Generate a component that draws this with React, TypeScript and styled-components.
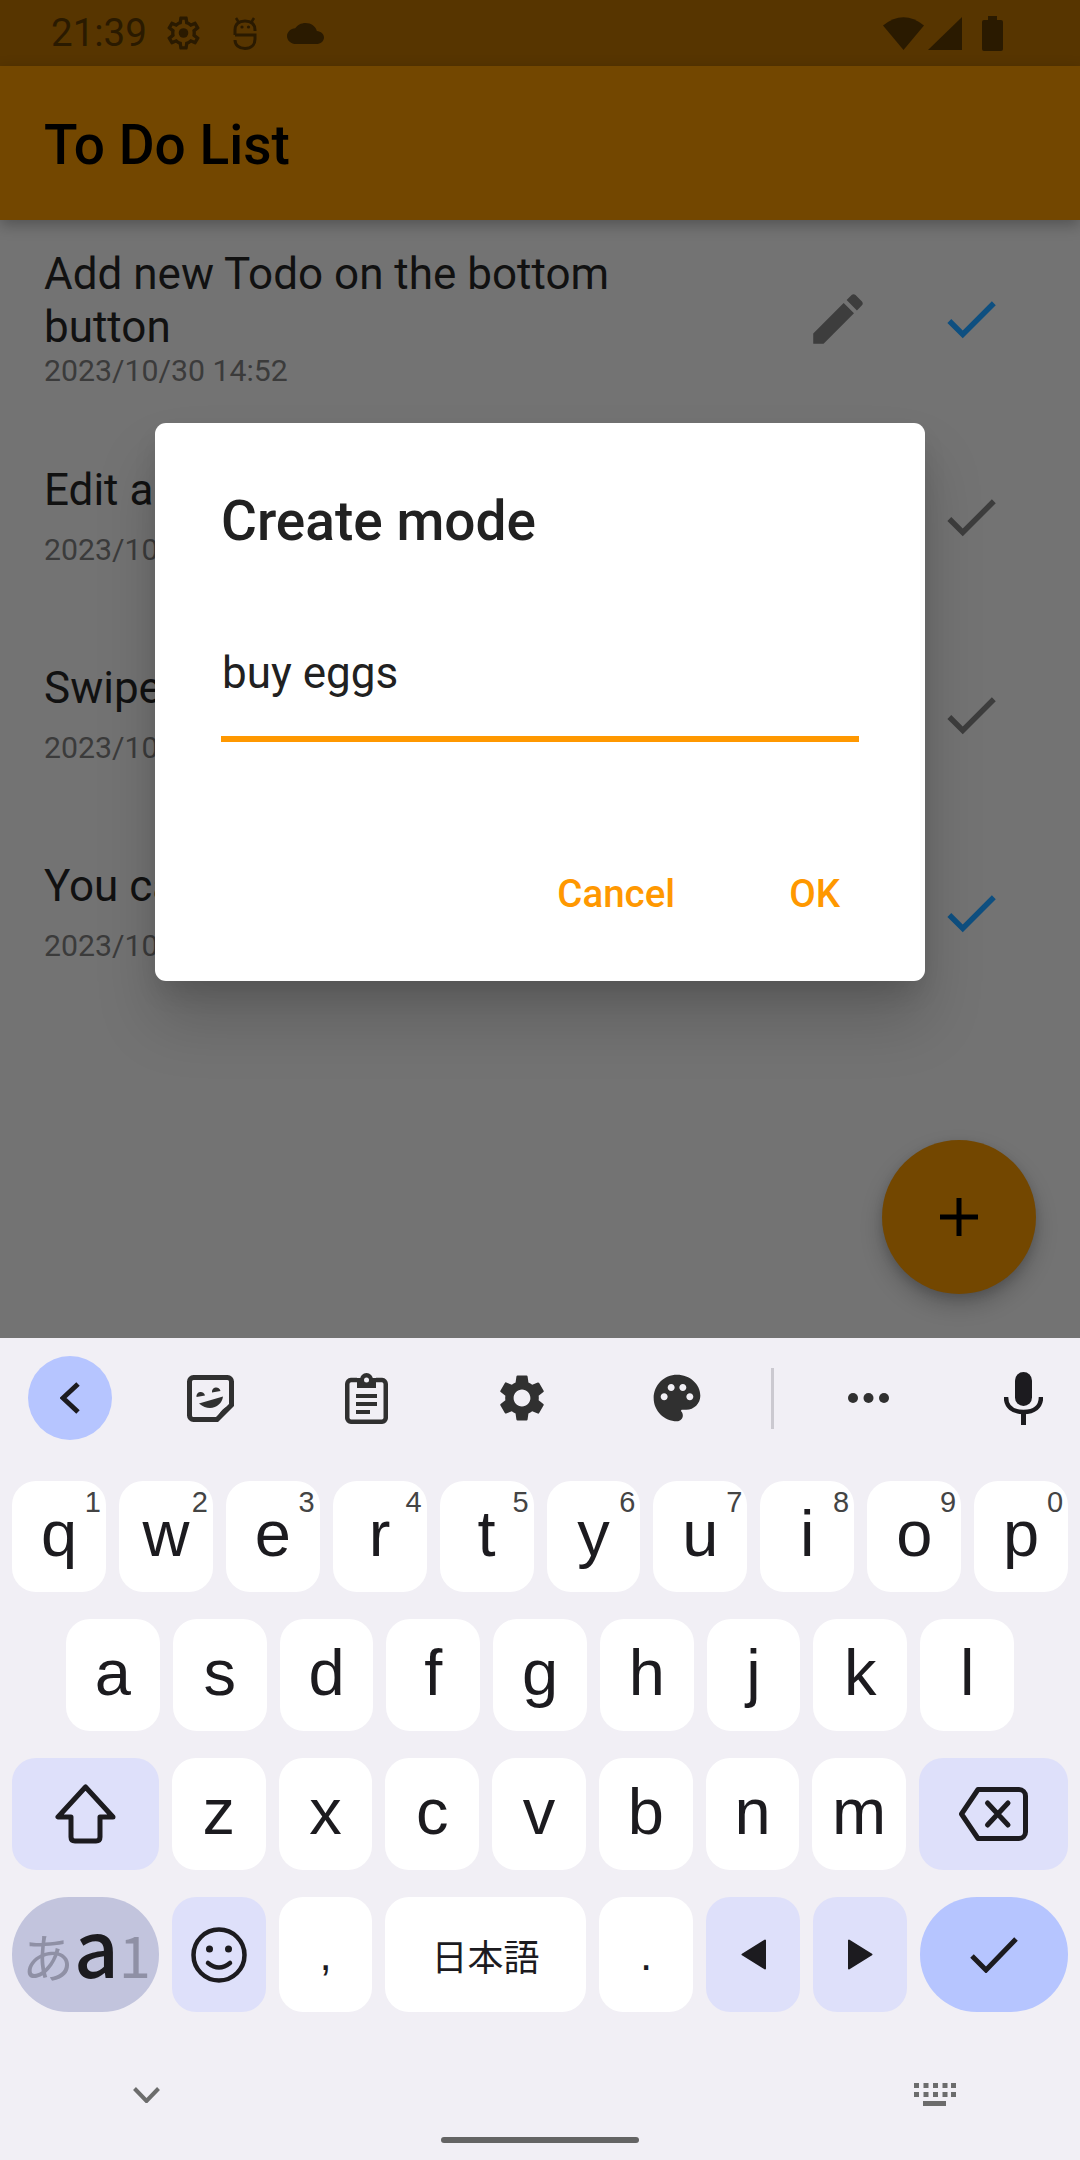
import styled, { createGlobalStyle } from "styled-components";

const GlobalStyle = createGlobalStyle`
  html, body {
    margin: 0;
    padding: 0;
    background: #f1eff5;
  }
  * {
    box-sizing: border-box;
  }
`;

const Page = styled.div`
  width: 1080px;
  height: 2160px;
  overflow: hidden;
  display: flex;
  flex-direction: column;
  font-family: Roboto, "Liberation Sans", sans-serif;
`;

const AppArea = styled.div`
  position: relative;
  height: 1338px;
  flex-shrink: 0;
  background: #737373;
`;

const StatusBar = styled.div`
  height: 66px;
  display: flex;
  align-items: center;
  padding: 0 77px 0 51px;
  background: #573500;
  color: #2a1a00;
`;

const Clock = styled.span`
  font-size: 38.5px;
  line-height: 66px;
`;

const StatusSpacer = styled.div`
  flex: 1;
`;

const StatusIcon = styled.svg<{ $left: number }>`
  display: block;
  flex-shrink: 0;
  margin-left: ${(p) => p.$left}px;
`;

const AppBar = styled.header`
  position: relative;
  height: 154px;
  display: flex;
  align-items: center;
  padding: 3px 0 0 44px;
  background: #734700;
  box-shadow: 0 5px 14px rgba(0, 0, 0, 0.28);
`;

const AppTitle = styled.h1`
  margin: 0;
  font-size: 55px;
  font-weight: 500;
  line-height: 64px;
  color: #000;
`;

const TodoRow = styled.div`
  height: 198px;
  display: flex;
  align-items: center;
  padding: 0 43px 0 44px;
`;

const TodoText = styled.div`
  flex: 1;
  margin-bottom: 2px;
`;

const TodoTitle = styled.div<{ $gap: number }>`
  max-width: 640px;
  margin-bottom: ${(p) => p.$gap}px;
  font-size: 44px;
  line-height: 53px;
  color: #111;
`;

const TodoDate = styled.div`
  font-size: 30.25px;
  line-height: 36px;
  color: #3b3b3b;
`;

const RowAction = styled.div<{ $color: string }>`
  width: 133px;
  display: flex;
  justify-content: center;
  color: ${(p) => p.$color};
`;

const Fab = styled.div`
  position: absolute;
  left: 882px;
  top: 1140px;
  width: 154px;
  height: 154px;
  border-radius: 50%;
  display: flex;
  align-items: center;
  justify-content: center;
  background: #734700;
  box-shadow: 0 11px 22px rgba(0, 0, 0, 0.22), 0 4px 10px rgba(0, 0, 0, 0.12);
`;

const Dialog = styled.div`
  position: absolute;
  left: 155px;
  top: 423px;
  width: 770px;
  height: 558px;
  display: flex;
  flex-direction: column;
  padding: 66px 66px 0 66px;
  border-radius: 11px;
  background: #fff;
  box-shadow: 0 40px 60px rgba(0, 0, 0, 0.17), 0 14px 28px -6px rgba(0, 0, 0, 0.14);
`;

const DialogTitle = styled.div`
  font-size: 55px;
  font-weight: 500;
  line-height: 64px;
  color: #212121;
`;

const DialogInput = styled.div`
  margin: 94px 0 0 0;
  padding: 0 0 37px 1px;
  border-bottom: 6px solid #ff9800;
  font-size: 44px;
  line-height: 52px;
  color: #212121;
`;

const DialogActions = styled.div`
  margin-top: 130px;
  padding-right: 19px;
  display: flex;
  justify-content: flex-end;
  gap: 114px;
`;

const DialogButton = styled.span`
  font-size: 38.5px;
  font-weight: 500;
  line-height: 44px;
  color: #ff9800;
`;

const Keyboard = styled.div`
  flex: 1;
  display: flex;
  flex-direction: column;
  background: #f1eff5;
`;

const Toolbar = styled.div`
  height: 120px;
  margin-bottom: 23px;
  display: flex;
  align-items: center;
  padding-left: 28px;
  color: #303030;
`;

const BackPill = styled.div`
  width: 84px;
  height: 84px;
  margin-right: 21px;
  border-radius: 50%;
  display: flex;
  align-items: center;
  justify-content: center;
  background: #b6c5ff;
`;

const ToolSlot = styled.div<{ $width: number }>`
  width: ${(p) => p.$width}px;
  flex-shrink: 0;
  display: flex;
  align-items: center;
  justify-content: center;
`;

const ToolDivider = styled.div`
  width: 3px;
  height: 61px;
  margin: 0 16px;
  background: #cbc9d0;
`;

const MicSlot = styled(ToolSlot)`
  margin-left: 27px;
`;

const KeyRows = styled.div`
  display: flex;
  flex-direction: column;
  gap: 27px;
  padding: 0 12px;
`;

const KeyRow = styled.div<{ $height: number; $inset?: number }>`
  height: ${(p) => p.$height}px;
  display: flex;
  gap: 13px;
  padding: 0 ${(p) => p.$inset ?? 0}px;
`;

const keyColors = {
  letter: "#ffffff",
  func: "#dee0fa",
  lang: "#c2c4dd",
  enter: "#b6c5ff",
};

const Key = styled.div<{ $tone?: keyof typeof keyColors; $width?: number }>`
  position: relative;
  ${(p) => (p.$width ? `width: ${p.$width}px; flex-shrink: 0;` : "flex: 1;")}
  display: flex;
  align-items: center;
  justify-content: center;
  border-radius: ${(p) => (p.$tone === "lang" || p.$tone === "enter" ? "57px" : "24px")};
  background: ${(p) => keyColors[p.$tone ?? "letter"]};
  color: #1c1b1f;
`;

const Letter = styled.span`
  padding-bottom: 6px;
  font-family: "Liberation Sans", Arial, sans-serif;
  font-size: 65px;
  line-height: 1;
`;

const KeyHint = styled.span`
  position: absolute;
  top: 7px;
  right: 5px;
  font-family: "Liberation Sans", Arial, sans-serif;
  font-size: 29px;
  line-height: 1;
  color: #444;
`;

const Punctuation = styled.span`
  font-family: "Liberation Sans", Arial, sans-serif;
  font-size: 44px;
  line-height: 1;
`;

const SpaceLabel = styled.span`
  font-family: "Noto Sans CJK JP", sans-serif;
  font-size: 36px;
  line-height: 1;
`;

const LangLabel = styled.div`
  display: flex;
  align-items: baseline;
  padding: 0 0 22px 2px;
  font-family: "Noto Sans CJK JP", sans-serif;
  color: #8f90a5;
`;

const LangKana = styled.span`
  font-size: 52px;
  line-height: 1;
`;

const LangLatin = styled.span`
  font-size: 78px;
  font-weight: 500;
  line-height: 1;
  color: #1c1b1f;
`;

const LangDigit = styled.span`
  font-size: 58px;
  line-height: 1;
`;

const BottomNav = styled.div`
  height: 23px;
  margin-top: 71px;
  display: flex;
  align-items: center;
  justify-content: space-between;
  padding: 0 124px 0 133px;
  color: #6c6c6c;
`;

const HomePill = styled.div`
  width: 198px;
  height: 6px;
  margin: 31px auto 0;
  border-radius: 3px;
  background: #646464;
`;

const GEAR_OUTLINE =
  "M19.43 12.98c.04-.32.07-.64.07-.98 0-.34-.03-.66-.07-.98l2.11-1.65c.19-.15.24-.42.12-.64l-2-3.46c-.09-.16-.26-.25-.44-.25-.06 0-.12.01-.17.03l-2.49 1c-.52-.4-1.08-.73-1.69-.98l-.38-2.65C14.46 2.18 14.25 2 14 2h-4c-.25 0-.46.18-.49.42l-.38 2.65c-.61.25-1.17.59-1.69.98l-2.49-1c-.06-.02-.12-.03-.18-.03-.17 0-.34.09-.43.25l-2 3.46c-.13.22-.07.49.12.64l2.11 1.65c-.04.32-.07.65-.07.98 0 .33.03.66.07.98l-2.11 1.65c-.19.15-.24.42-.12.64l2 3.46c.09.16.26.25.44.25.06 0 .12-.01.17-.03l2.49-1c.52.4 1.08.73 1.69.98l.38 2.65c.03.24.24.42.49.42h4c.25 0 .46-.18.49-.42l.38-2.65c.61-.25 1.17-.59 1.69-.98l2.49 1c.06.02.12.03.18.03.17 0 .34-.09.43-.25l2-3.46c.12-.22.07-.49-.12-.64l-2.11-1.65zm-1.98-1.71c.04.31.05.52.05.73 0 .21-.02.43-.05.73l-.14 1.13.89.7 1.08.84-.7 1.21-1.27-.51-1.04-.42-.9.68c-.43.32-.84.56-1.25.73l-1.06.43-.16 1.13-.2 1.35h-1.4l-.19-1.35-.16-1.13-1.06-.43c-.43-.18-.83-.41-1.23-.71l-.91-.7-1.06.43-1.27.51-.7-1.21 1.08-.84.89-.7-.14-1.13c-.03-.31-.05-.54-.05-.74s.02-.43.05-.73l.14-1.13-.89-.7-1.08-.84.7-1.21 1.27.51 1.04.42.9-.68c.43-.32.84-.56 1.25-.73l1.06-.43.16-1.13.2-1.35h1.39l.19 1.35.16 1.13 1.06.43c.43.18.83.41 1.23.71l.91.7 1.06-.43 1.27-.51.7 1.21-1.07.85-.89.7.14 1.13z";
const GEAR_SOLID =
  "M19.14 12.94c.04-.3.06-.61.06-.94 0-.32-.02-.64-.07-.94l2.03-1.58c.18-.14.23-.41.12-.61l-1.92-3.32c-.12-.22-.37-.29-.59-.22l-2.39.96c-.5-.38-1.03-.7-1.62-.94l-.36-2.54c-.04-.24-.24-.41-.48-.41h-3.84c-.24 0-.43.17-.47.41l-.36 2.54c-.59.24-1.13.57-1.62.94l-2.39-.96c-.22-.08-.47 0-.59.22L2.74 8.87c-.12.21-.08.47.12.61l2.03 1.58c-.05.3-.09.63-.09.94s.02.64.07.94l-2.03 1.58c-.18.14-.23.41-.12.61l1.92 3.32c.12.22.37.29.59.22l2.39-.96c.5.38 1.03.7 1.62.94l.36 2.54c.05.24.24.41.48.41h3.84c.24 0 .44-.17.47-.41l.36-2.54c.59-.24 1.13-.56 1.62-.94l2.39.96c.22.08.47 0 .59-.22l1.92-3.32c.12-.22.07-.47-.12-.61l-2.01-1.58zM12 15.6c-1.98 0-3.6-1.62-3.6-3.6s1.62-3.6 3.6-3.6 3.6 1.62 3.6 3.6-1.62 3.6-3.6 3.6z";
const PALETTE =
  "M12 2C6.49 2 2 6.49 2 12s4.49 10 10 10c1.38 0 2.5-1.12 2.5-2.5 0-.61-.23-1.2-.64-1.67-.08-.1-.13-.21-.13-.33 0-.28.22-.5.5-.5H16c3.31 0 6-2.69 6-6 0-4.96-4.49-9-10-9zm5.5 11c-.83 0-1.5-.67-1.5-1.5s.67-1.5 1.5-1.5 1.5.67 1.5 1.5-.67 1.5-1.5 1.5zm-3-4c-.83 0-1.5-.67-1.5-1.5S13.67 6 14.5 6s1.5.67 1.5 1.5S15.33 9 14.5 9zM5 11.5c0-.83.67-1.5 1.5-1.5s1.5.67 1.5 1.5S7.33 13 6.5 13 5 12.33 5 11.5zm6-4c0 .83-.67 1.5-1.5 1.5S8 8.33 8 7.5 8.67 6 9.5 6s1.5.67 1.5 1.5z";
const PENCIL =
  "M3 17.25V21h3.75L17.81 9.94l-3.75-3.75L3 17.25zM20.71 7.04c.39-.39.39-1.02 0-1.41l-2.34-2.34c-.39-.39-1.02-.39-1.41 0l-1.83 1.83 3.75 3.75 1.83-1.83z";
const CHECK = "M9 16.17L4.83 12l-1.42 1.41L9 19 21 7l-1.41-1.41z";

const todos = [
  { title: "Add new Todo on the bottom button", gap: -1, done: true },
  { title: "Edit a Todo", gap: 15, done: false },
  { title: "Swipe to delete", gap: 15, done: false },
  { title: "You can check", gap: 15, done: true },
];

const firstRow = [
  ["q", "1"],
  ["w", "2"],
  ["e", "3"],
  ["r", "4"],
  ["t", "5"],
  ["y", "6"],
  ["u", "7"],
  ["i", "8"],
  ["o", "9"],
  ["p", "0"],
];

function SignalIcons() {
  return (
    <>
      <StatusIcon $left={0} width="41" height="33" viewBox="0 0 41 33" fill="currentColor">
        <path d="M0 8.5Q20.5 -8 41 8.5L20.5 33Z" />
      </StatusIcon>
      <StatusIcon $left={4} width="34" height="33" viewBox="0 0 34 33" fill="currentColor">
        <path d="M34 0V33H0Z" />
      </StatusIcon>
      <StatusIcon $left={20} width="21" height="35" viewBox="0 0 21 35" fill="currentColor">
        <path d="M6 0H15V4H19Q21 4 21 6V33Q21 35 19 35H2Q0 35 0 33V6Q0 4 2 4H6Z" />
      </StatusIcon>
    </>
  );
}

function NotificationIcons() {
  return (
    <>
      <StatusIcon $left={20} width="33" height="34" viewBox="2 2 20 20" fill="currentColor">
        <path fillRule="evenodd" d={GEAR_OUTLINE} />
        <circle cx="12" cy="12" r="2.9" />
      </StatusIcon>
      <StatusIcon
        $left={33}
        width="24"
        height="33"
        viewBox="0 0 24 33"
        fill="none"
        stroke="currentColor"
        strokeWidth="3"
      >
        <path d="M2 18V13C2 7 6 4 12 4S22 7 22 13V14" />
        <path d="M2 18H22V22C22 28 18 31.5 12 31.5S2 28 2 23" />
        <path d="M3 1L5.5 5M21 1L18.5 5" strokeWidth="2.5" />
        <circle cx="9" cy="10" r="1.6" fill="currentColor" stroke="none" />
        <circle cx="15.5" cy="10" r="1.6" fill="currentColor" stroke="none" />
      </StatusIcon>
      <StatusIcon $left={30} width="37" height="21" viewBox="0 4 24 16" preserveAspectRatio="none" fill="currentColor">
        <path d="M19.35 10.04C18.67 6.59 15.64 4 12 4 9.11 4 6.6 5.64 5.35 8.04 2.34 8.36 0 10.91 0 14c0 3.31 2.69 6 6 6h13c2.76 0 5-2.24 5-5 0-2.64-2.05-4.78-4.65-4.96z" />
      </StatusIcon>
    </>
  );
}

function StickerIcon() {
  return (
    <svg width="47" height="47" viewBox="0 0 47 47" fill="currentColor">
      <path
        d="M6.5 2.5H40.500A4 4 0 0 1 44.500 6.500V30L30 44.500H6.500A4 4 0 0 1 2.500 40.500V6.500A4 4 0 0 1 6.500 2.500Z"
        fill="none"
        stroke="currentColor"
        strokeWidth="5"
      />
      <path d="M47 30Q33 31 29 47Z" />
      <path d="M9.500 22A4.300 4.300 0 0 1 18 20.500Z" />
      <path d="M25 17.500A4.300 4.300 0 0 1 33.500 16Z" />
      <path d="M12 28.500L36 21.500C35 31 23 38 12 28.500Z" />
    </svg>
  );
}

function ClipboardIcon() {
  return (
    <svg width="43" height="51" viewBox="0 0 43 51" fill="currentColor">
      <path
        d="M12 7H6A4 4 0 0 0 2.250 11V45A4 4 0 0 0 6 48.750H37A4 4 0 0 0 40.750 45V11A4 4 0 0 0 37 7H31"
        fill="none"
        stroke="currentColor"
        strokeWidth="4.5"
      />
      <rect x="12" y="5" width="19" height="10" />
      <circle cx="21.500" cy="6.500" r="6.500" />
      <circle cx="21.500" cy="7" r="2.500" fill="#f1eff5" />
      <rect x="11" y="21" width="21" height="4" />
      <rect x="11" y="29" width="21" height="4" />
      <rect x="11" y="37" width="14" height="4" />
    </svg>
  );
}

function MicIcon() {
  return (
    <svg width="39" height="53" viewBox="0 0 39 53" fill="#1c1b1f">
      <rect x="11" y="0" width="17" height="34" rx="8.500" />
      <path d="M2 25C2 35 9 40 19.500 40S37 35 37 25" fill="none" stroke="#1c1b1f" strokeWidth="4.500" />
      <rect x="17" y="40" width="5" height="13" />
    </svg>
  );
}

function KeyboardHideIcon() {
  return (
    <svg width="42" height="23" viewBox="0 0 42 23" fill="currentColor">
      {[0, 9.500, 19, 28.500, 37].map((x) => (
        <rect key={`a${x}`} x={x} y="0" width="5" height="5" />
      ))}
      {[0, 9.500, 19, 28.500, 37].map((x) => (
        <rect key={`b${x}`} x={x} y="9" width="5" height="5" />
      ))}
      <rect x="9" y="18" width="23" height="5" />
    </svg>
  );
}

export default function App() {
  return (
    <Page>
      <GlobalStyle />
      <AppArea>
        <StatusBar>
          <Clock>21:39</Clock>
          <NotificationIcons />
          <StatusSpacer />
          <SignalIcons />
        </StatusBar>
        <AppBar>
          <AppTitle>To Do List</AppTitle>
        </AppBar>
        {todos.map((todo) => (
          <TodoRow key={todo.title}>
            <TodoText>
              <TodoTitle $gap={todo.gap}>{todo.title}</TodoTitle>
              <TodoDate>2023/10/30 14:52</TodoDate>
            </TodoText>
            <RowAction $color="#3d3d3d">
              <svg width="66" height="66" viewBox="0 0 24 24" fill="currentColor">
                <path d={PENCIL} />
              </svg>
            </RowAction>
            <RowAction $color={todo.done ? "#0e4f80" : "#3d3d3d"}>
              <svg width="66" height="66" viewBox="0 0 24 24" fill="currentColor">
                <path d={CHECK} />
              </svg>
            </RowAction>
          </TodoRow>
        ))}
        <Fab>
          <svg width="38" height="38" viewBox="0 0 38 38" fill="#000">
            <rect x="16.500" y="0" width="5" height="38" />
            <rect x="0" y="16.500" width="38" height="5" />
          </svg>
        </Fab>
        <Dialog>
          <DialogTitle>Create mode</DialogTitle>
          <DialogInput>buy eggs</DialogInput>
          <DialogActions>
            <DialogButton>Cancel</DialogButton>
            <DialogButton>OK</DialogButton>
          </DialogActions>
        </Dialog>
      </AppArea>
      <Keyboard>
        <Toolbar>
          <BackPill>
            <svg width="20" height="32" viewBox="0 0 20 32" fill="none" stroke="#1c1b1f" strokeWidth="5">
              <path d="M18 2L3 16L18 30" />
            </svg>
          </BackPill>
          <ToolSlot $width={155.5}>
            <StickerIcon />
          </ToolSlot>
          <ToolSlot $width={155.5}>
            <ClipboardIcon />
          </ToolSlot>
          <ToolSlot $width={155.5}>
            <svg width="56" height="56" viewBox="0 0 24 24" fill="currentColor">
              <path d={GEAR_SOLID} />
            </svg>
          </ToolSlot>
          <ToolSlot $width={155.5}>
            <svg width="56" height="56" viewBox="0 0 24 24" fill="currentColor">
              <path d={PALETTE} />
            </svg>
          </ToolSlot>
          <ToolDivider />
          <ToolSlot $width={156}>
            <svg width="41" height="10" viewBox="0 0 41 10" fill="currentColor">
              <circle cx="5" cy="5" r="5" />
              <circle cx="20.500" cy="5" r="5" />
              <circle cx="36" cy="5" r="5" />
            </svg>
          </ToolSlot>
          <MicSlot $width={100}>
            <MicIcon />
          </MicSlot>
        </Toolbar>
        <KeyRows>
          <KeyRow $height={111}>
            {firstRow.map(([letter, hint]) => (
              <Key key={letter}>
                <Letter>{letter}</Letter>
                <KeyHint>{hint}</KeyHint>
              </Key>
            ))}
          </KeyRow>
          <KeyRow $height={112} $inset={54}>
            {"asdfghjkl".split("").map((letter) => (
              <Key key={letter}>
                <Letter>{letter}</Letter>
              </Key>
            ))}
          </KeyRow>
          <KeyRow $height={112}>
            <Key $tone="func" $width={147}>
              <svg width="61" height="60" viewBox="0 0 61 60" fill="none" stroke="#1c1b1f" strokeWidth="5" strokeLinejoin="round">
                <path d="M30.500 3L3 33H16V53Q16 57 20 57H41Q45 57 45 53V33H58Z" />
              </svg>
            </Key>
            {"zxcvbnm".split("").map((letter) => (
              <Key key={letter}>
                <Letter>{letter}</Letter>
              </Key>
            ))}
            <Key $tone="func" $width={149}>
              <svg width="69" height="54" viewBox="0 0 69 54" fill="none" stroke="#1c1b1f" strokeWidth="5" strokeLinecap="round" strokeLinejoin="round">
                <path d="M19 2.500H60A6.500 6.500 0 0 1 66.500 9V45A6.500 6.500 0 0 1 60 51.500H19L2.500 27Z" />
                <path d="M28.500 16L49 38M49 16L28.500 38" />
              </svg>
            </Key>
          </KeyRow>
          <KeyRow $height={115}>
            <Key $tone="lang" $width={147}>
              <LangLabel>
                <LangKana>あ</LangKana>
                <LangLatin>a</LangLatin>
                <LangDigit>1</LangDigit>
              </LangLabel>
            </Key>
            <Key $tone="func" $width={94}>
              <svg width="56" height="56" viewBox="0 0 56 56" fill="none" stroke="#1c1b1f" strokeWidth="4.500" strokeLinecap="round">
                <circle cx="28" cy="28" r="25.500" />
                <circle cx="18.500" cy="22" r="3.500" fill="#1c1b1f" stroke="none" />
                <circle cx="37.500" cy="22" r="3.500" fill="#1c1b1f" stroke="none" />
                <path d="M17 36Q28 45 39 36" />
              </svg>
            </Key>
            <Key $width={93}>
              <Punctuation>,</Punctuation>
            </Key>
            <Key>
              <SpaceLabel>日本語</SpaceLabel>
            </Key>
            <Key $width={94}>
              <Punctuation>.</Punctuation>
            </Key>
            <Key $tone="func" $width={94}>
              <svg width="25" height="31" viewBox="0 0 25 31" fill="#1c1b1f" stroke="#1c1b1f" strokeWidth="2" strokeLinejoin="round">
                <path d="M24 1.500V29.500L1.500 15.500Z" />
              </svg>
            </Key>
            <Key $tone="func" $width={94}>
              <svg width="25" height="31" viewBox="0 0 25 31" fill="#1c1b1f" stroke="#1c1b1f" strokeWidth="2" strokeLinejoin="round">
                <path d="M1 1.500V29.500L23.500 15.500Z" />
              </svg>
            </Key>
            <Key $tone="enter" $width={148}>
              <svg width="48" height="36" viewBox="0 0 48 36" fill="none" stroke="#1c1b1f" strokeWidth="5">
                <path d="M2 19L16 33L46 2" />
              </svg>
            </Key>
          </KeyRow>
        </KeyRows>
        <BottomNav>
          <svg width="27" height="16" viewBox="0 0 27 16" fill="none" stroke="currentColor" strokeWidth="4">
            <path d="M1.500 1.500L13.500 14L25.500 1.500" />
          </svg>
          <KeyboardHideIcon />
        </BottomNav>
        <HomePill />
      </Keyboard>
    </Page>
  );
}
